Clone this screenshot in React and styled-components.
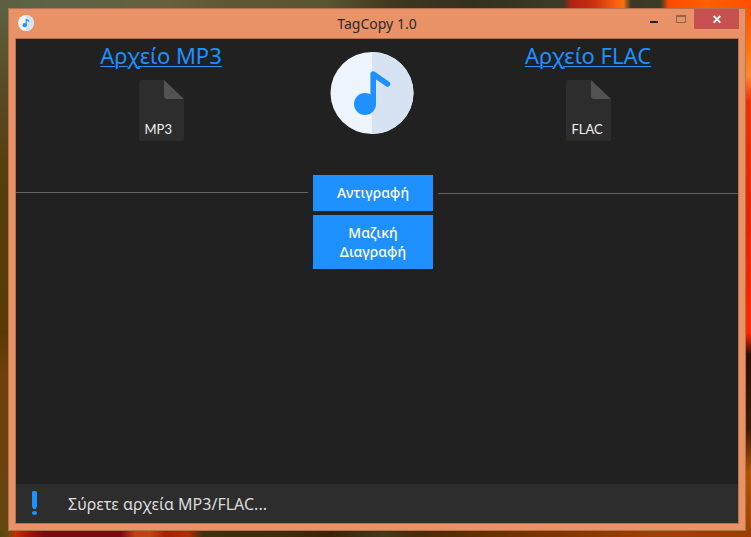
import React from "react";
import styled, { createGlobalStyle } from "styled-components";

const GlobalStyle = createGlobalStyle`
  * { box-sizing: border-box; }
  body { margin: 0; font-family: "Noto Sans", "Open Sans", sans-serif; }
`;

const Desktop = styled.div`
  min-height: 100vh;
  padding: 8px 5px 6px 8px;
  display: flex;
  background:
    linear-gradient(90deg, #5c6040 0%, #5c6448 8%, #66603c 22%, #605834 30%, #58542f 44%, #40381f 52%, #33301f 63%, #3c3c26 75%, #b02014 76%, #c83010 79%, #f86010 82%, #f87010 83%, #3c3824 84%, #3a3c26 88%, #ff4a00 89%, #ff6000 94%, #ff5000 100%) top / 100% 8px no-repeat,
    linear-gradient(90deg, #5c4412 0%, #684a10 1%, #c82c04 2%, #a01408 4%, #7c0810 6%, #7c0810 16%, #c04018 18%, #c04414 20%, #a82004 22%, #b42c04 25%, #40300c 27%, #402c08 38%, #3c2204 44%, #44381a 51%, #4c2a04 56%, #7a3400 72%, #a04000 87%, #a03c00 100%) bottom / 100% 6px no-repeat,
    linear-gradient(180deg, #5c6444 0%, #5a4c28 15%, #57400f 30%, #5a3a04 62%, #70400c 70%, #6c400c 84%, #644810 100%) left / 8px 100% no-repeat,
    linear-gradient(180deg, #ff4a00 0%, #ff7a10 10%, #ff8a30 14%, #f03000 19%, #e82400 40%, #ff2800 62%, #2c1004 66%, #3c1c04 80%, #b05400 88%, #a04000 100%) right / 5px 100% no-repeat,
    #4a3010;
`;

const Window = styled.main`
  flex: 1;
  display: flex;
  flex-direction: column;
  padding: 0 6px 6px;
  background: #e99167;
  border: 1px solid #b2714f;
`;

const TitleBar = styled.header`
  height: 29px;
  display: grid;
  grid-template-columns: 1fr auto 1fr;
  align-items: start;
`;

const AppIcon = styled.div`
  padding: 6px 3px;
  svg { display: block; }
`;

const Title = styled.h1`
  margin: 0;
  font-size: 14px;
  line-height: 29px;
  font-weight: 400;
  color: #2b2b2b;
`;

const Controls = styled.div`
  display: flex;
  justify-content: flex-end;
`;

const ControlButton = styled.button`
  width: ${(p) => (p.$close ? 45 : 27)}px;
  height: 20px;
  padding: 0;
  border: 0;
  display: grid;
  place-items: center;
  background: ${(p) => (p.$close ? "#c75050" : "transparent")};
`;

const Client = styled.div`
  flex: 1;
  display: flex;
  flex-direction: column;
  border: 1px solid #b2714f;
  background: #212121;
`;

const Files = styled.section`
  display: grid;
  grid-template-columns: 290px 1fr 300px;
  height: 136px;
`;

const FileColumn = styled.div`
  display: flex;
  flex-direction: column;
  align-items: center;
  gap: 9px;
`;

const FileLink = styled.a`
  font-size: 22px;
  line-height: 32px;
  color: #1e90ff;
  text-decoration: underline;
  text-decoration-thickness: 1px;
  text-underline-offset: 2px;
`;

const FileCard = styled.div`
  width: 45px;
  height: 61px;
  display: grid;
  & > * { grid-area: 1 / 1; }
`;

const FileType = styled.span`
  align-self: end;
  padding: 0 0 4px 6px;
  font-family: Lato, sans-serif;
  font-size: 13px;
  line-height: 16px;
  color: #f0f0f0;
`;

const Logo = styled.div`
  display: flex;
  justify-content: center;
  padding-top: 13px;
`;

const Actions = styled.section`
  display: grid;
  grid-template-columns: 292px 1fr 300px;
  align-items: start;
`;

const Rule = styled.hr`
  width: 100%;
  margin: ${(p) => p.$top}px 0 0;
  border: 0;
  border-top: 1px solid #646464;
`;

const ButtonStack = styled.div`
  display: flex;
  flex-direction: column;
  gap: 4px;
  padding: 0 5px;
`;

const ActionButton = styled.button`
  border: 0;
  padding: 8px 20px;
  background: #1e90ff;
  color: #fff;
  font-family: inherit;
  font-size: 14px;
  font-weight: 500;
  line-height: ${(p) => (p.$compact ? 19 : 20)}px;
`;

const StatusBar = styled.footer`
  margin-top: auto;
  height: 39px;
  display: flex;
  align-items: center;
  gap: 30px;
  padding-left: 15px;
  background: #2d2d2d;
  color: #dcdcdc;
  font-size: 16px;
`;

function NoteIcon({ width, height }) {
  return (
    <svg width={width} height={height} viewBox="0 0 84 82" preserveAspectRatio="none" aria-hidden="true">
      <ellipse cx="42" cy="41" rx="41.5" ry="41" fill="#edf4fc" />
      <path d="M42 0A41.5 41 0 0 1 42 82Z" fill="#d7e2f2" />
      <circle cx="35" cy="52" r="11" fill="#1e90ff" />
      <path d="M43.2 52V22L57.5 32" fill="none" stroke="#1e90ff" strokeWidth="5.6" strokeLinecap="round" strokeLinejoin="round" />
    </svg>
  );
}

function FilePanel({ label, type }) {
  return (
    <FileColumn>
      <FileLink href="#">{label}</FileLink>
      <FileCard>
        <svg width="45" height="61" viewBox="0 0 45 61" aria-hidden="true">
          <path d="M2 0H25L45 19V59Q45 61 43 61H2Q0 61 0 59V2Q0 0 2 0Z" fill="#2d2d2d" />
          <path d="M25 0L45 19H28Q25 19 25 16Z" fill="#525252" />
        </svg>
        <FileType>{type}</FileType>
      </FileCard>
    </FileColumn>
  );
}

export default function App() {
  return (
    <Desktop>
      <GlobalStyle />
      <Window>
        <TitleBar>
          <AppIcon><NoteIcon width={16} height={16} /></AppIcon>
          <Title>TagCopy 1.0</Title>
          <Controls>
            <ControlButton aria-label="Minimize">
              <svg width="8" height="20"><path d="M0 12H8V14H0Z" fill="#222" /></svg>
            </ControlButton>
            <ControlButton aria-label="Maximize">
              <svg width="10" height="20" shapeRendering="crispEdges"><path d="M0 6H10V14H0ZM1 8V13H9V8Z" fillRule="evenodd" fill="#94634b" /></svg>
            </ControlButton>
            <ControlButton $close aria-label="Close">
              <svg width="8" height="20"><path d="M0.7 7L7.3 13.6M7.3 7L0.7 13.6" stroke="#fff" strokeWidth="1.8" /></svg>
            </ControlButton>
          </Controls>
        </TitleBar>
        <Client>
          <Files>
            <FilePanel label="Αρχείο MP3" type="MP3" />
            <Logo><NoteIcon width={84} height={82} /></Logo>
            <FilePanel label="Αρχείο FLAC" type="FLAC" />
          </Files>
          <Actions>
            <Rule $top={17} />
            <ButtonStack>
              <ActionButton>Αντιγραφή</ActionButton>
              <ActionButton $compact>Μαζική<br />Διαγραφή</ActionButton>
            </ButtonStack>
            <Rule $top={18} />
          </Actions>
          <StatusBar role="status">
            <svg width="7" height="26" viewBox="0 0 7 26" aria-hidden="true">
              <path d="M2 0H5L6 1V15L5 18H2L1 15V1Z" fill="#1e90ff" />
              <ellipse cx="3.5" cy="22" rx="2.6" ry="2" fill="#1e90ff" />
            </svg>
            <span>Σύρετε αρχεία MP3/FLAC...</span>
          </StatusBar>
        </Client>
      </Window>
    </Desktop>
  );
}
